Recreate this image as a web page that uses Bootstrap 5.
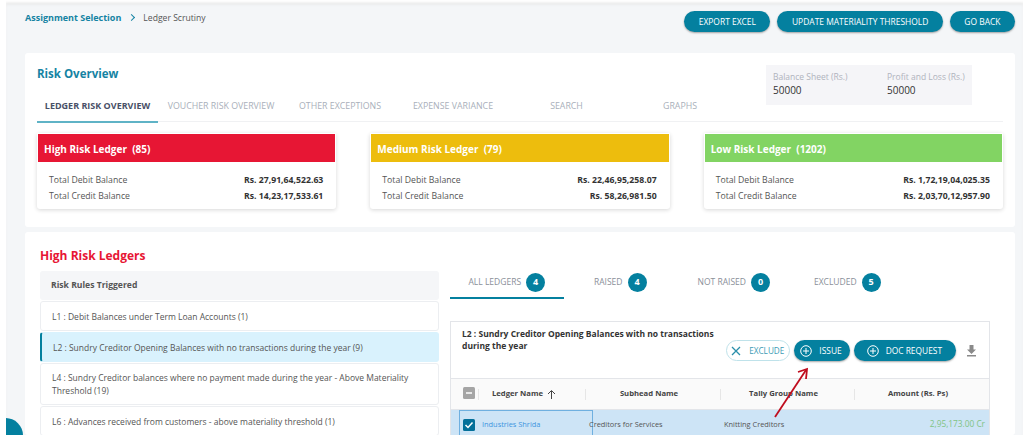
<!DOCTYPE html>
<html lang="en"><head><meta charset="utf-8"><title>Ledger Scrutiny</title>
<link href="https://cdn.jsdelivr.net/npm/bootstrap@5.3.0/dist/css/bootstrap.min.css" rel="stylesheet">
<style>
html,body{height:442px;overflow:hidden;background:#fff}
body{font-family:"Open Sans","Liberation Sans",sans-serif;color:#444;font-size:9px}
.shell{margin-left:6px;height:435px;background:#f4f6f8;overflow:hidden;position:relative;box-shadow:inset 0 4px 3px -1px #fff,inset 0 5px 3px -1px #ddd}
.topline{height:49px;padding:11px 8px 0 19px;margin-bottom:4px}
.crumbs{margin:0;font-size:8.6px;line-height:14px}
.crumbs a{color:#1583a3;font-weight:700;text-decoration:none;font-size:9px}
.crumbs .breadcrumb-item+.breadcrumb-item{padding-left:8px;color:#555}
.crumbs .breadcrumb-item+.breadcrumb-item::before{content:"";display:inline-block;width:5px;height:5px;border-top:1.5px solid #1583a3;border-right:1.5px solid #1583a3;transform:rotate(45deg);padding:0;margin:0 9px 1px 0;float:none}
.toptools{gap:7px}
.pill{background:#04809f;color:#fff;border:0;border-radius:11px;font-size:8.45px;line-height:12px;height:21px;padding:0 14.5px;box-shadow:0 1px 2px rgba(0,0,0,.35);display:inline-flex;align-items:center;white-space:nowrap}
.pill:hover{background:#04809f;color:#fff}
.panel{margin-left:19px;margin-right:8px;background:#fff;border:0;border-radius:3px}
.overview{height:174px;padding:13px 12px 0;margin-bottom:5px;position:relative}
.ov-title{font-size:11.5px;font-weight:700;color:#1583a3;line-height:16px;margin:0}
.tabs1{border-bottom:1px solid #f0f1f3;margin-top:7px;height:33px;flex-wrap:nowrap}
.tabs1 .nav-link{font-size:8.8px;color:#a9afba;padding:0;line-height:34px;height:32px;text-align:center;border-bottom:2px solid transparent}
.tabs1 .nav-link.active{color:#495067;font-weight:700;font-size:9px;border-bottom-color:#5fb3c6;height:34px}
.t1{width:121px}.t2{width:126px}.t3{width:112px}.t4{width:114px}.t5{width:113px}.t6{width:114px}
.stat{position:absolute;left:741px;top:12px;width:206px;height:40px;background:#f5f5f8;padding:6px 7px 0}
.stat div{width:114px;flex:none;line-height:12px;font-size:8.5px;color:#b0b3bd}
.stat div+div{width:85px}
.stat b{display:block;font-weight:400;font-size:10px;color:#333;line-height:14px}
.risks{margin-top:11px;gap:34px}
.rcard{width:299.5px;height:76px;border:0;box-shadow:0 1px 4px rgba(0,0,0,.16);border-radius:3px}
.rcard .card-header{height:30px;line-height:30px;padding:0 6px;font-size:10px;font-weight:700;color:#fff;border:1px solid #fff;border-radius:0;margin:0}
.rh{background:#e71634}.rm{background:#edbd0d}.rl{background:#82d463}
.rcard .card-body{padding:10px 13px 0 12px;line-height:15.5px;font-size:8.7px;color:#555}
.rcard b{color:#333}
.ledgers{height:203px;padding:0 25px 0 15px;overflow:hidden}
.led-title{font-size:12px;font-weight:700;color:#e71634;line-height:16px;margin:16px 0 7px}
.cols{gap:11px}
.lcol{width:399px;flex:none}
.rule-head{height:29px;background:#f5f6f8;border-radius:3px;line-height:29px;padding-left:11px;font-weight:700;color:#555;font-size:8.6px;margin-bottom:1px}
.rules{border-radius:3px}
.rules .list-group-item{padding:0 11px;font-size:8.5px;line-height:13px;color:#555;border:1px solid #eceef1;border-radius:3px;margin:0 0 1px;display:flex;align-items:center;height:30px}
.rules .list-group-item.tall{height:42px}
.rules .list-group-item.active{background:#d9f2fd;color:#555;border-color:#d9f2fd;border-left:2px solid #04809f;margin-top:0}
.rcol{flex:1;min-width:0;margin-top:-1px}
.tabs2{height:29px;flex-wrap:nowrap}
.tabs2 .nav-link{padding:0 0 3px;font-size:8.5px;color:#8a8f99;display:flex;align-items:center;justify-content:center;gap:5px;height:29px;border-bottom:2px solid transparent}
.tabs2 .nav-item{width:113.5px}
.tabs2 .nav-link.active{border-bottom-color:#04809f}
.cnt{background:#04809f;color:#fff;border-radius:50%;width:19px;height:19px;font-size:9px;font-weight:700;display:inline-flex;align-items:center;justify-content:center;padding:0}
.tpanel{margin-top:22px;width:540px;border:1px solid #e3e5e9;border-bottom:0;height:115px;background:#fff}
.thead-row{height:56px;padding:6px 12px 0 11px}
.tpanel h6{font-size:8.5px;line-height:12px;font-weight:700;color:#333;width:262px;flex:none;margin:0}
.acts{margin-top:12px;gap:4px;margin-left:auto;align-items:flex-start}
.acts .pill{font-size:8.4px;gap:7px;padding:0 8px 0 6px}
.acts .doc{padding:0 14px 0 13px}
.acts .ghost{background:#fff;color:#3d9bb5;border:1px solid #bfe2ea;box-shadow:none;font-size:8.2px;padding:0 5px 0 4px;gap:8px}
.dl{margin:5px 0 0 6px}
.ltable{margin:0;border-top:1px solid #e3e5e9;table-layout:fixed;width:100%}
.ltable th{height:31px;background:#fafafa;font-size:7.7px;font-weight:700;color:#444;text-align:center;vertical-align:middle;padding:0 7px 0 0;border-bottom:1px solid #e3e5e9;position:relative}
.ltable th+th::before{content:"";position:absolute;left:0;top:10px;height:11px;border-left:1px solid #e6e6e6}
.ltable th.first{text-align:left;padding-left:12px}
.ltable th.sorted{padding-right:15px}
.ltable tbody tr{background:#cde4f6}
.ltable td{height:29px;background:transparent;padding:0 0 0 4px;font-size:7.4px;color:#555;vertical-align:middle;border:0;box-shadow:none}
.ltable td.focuscell{padding:0}
.ltable td.cr{color:#7fc384;text-align:right;padding:0 4px 0 0;font-size:8.3px}
.chk{width:12px;height:12px;border-radius:1.5px;display:inline-flex;align-items:center;justify-content:center;flex:none}
.chk-m{background:#a5a5a5}
.chk-c{background:#04709a}
.focus{display:flex;align-items:center;height:29px;border:1px solid #6fb0e0;width:134px;margin-left:8px;padding-left:3px;gap:7px;color:#3d94e0}
.bubble{position:absolute;left:-18px;bottom:-18px;width:35px;height:35px;background:#04809f;border-radius:50%}
.arrow{position:absolute;left:764px;top:360px;width:50px;height:62px;pointer-events:none}
</style></head>
<body>
<div class="shell">
  <div class="topline d-flex justify-content-between">
    <nav aria-label="breadcrumb"><ol class="breadcrumb crumbs"><li class="breadcrumb-item"><a href="#">Assignment Selection</a></li><li class="breadcrumb-item active">Ledger Scrutiny</li></ol></nav>
    <div class="d-flex toptools"><button class="btn pill">EXPORT EXCEL</button><button class="btn pill">UPDATE MATERIALITY THRESHOLD</button><button class="btn pill">GO BACK</button></div>
  </div>
  <section class="panel overview">
    <h5 class="ov-title">Risk Overview</h5>
    <ul class="nav tabs1">
      <li class="nav-item t1"><a class="nav-link active" href="#">LEDGER RISK OVERVIEW</a></li>
      <li class="nav-item t2"><a class="nav-link" href="#">VOUCHER RISK OVERVIEW</a></li>
      <li class="nav-item t3"><a class="nav-link" href="#">OTHER EXCEPTIONS</a></li>
      <li class="nav-item t4"><a class="nav-link" href="#">EXPENSE VARIANCE</a></li>
      <li class="nav-item t5"><a class="nav-link" href="#">SEARCH</a></li>
      <li class="nav-item t6"><a class="nav-link" href="#">GRAPHS</a></li>
    </ul>
    <div class="stat d-flex"><div>Balance Sheet (Rs.)<b>50000</b></div><div>Profit and Loss (Rs.)<b>50000</b></div></div>
    <div class="d-flex risks">
      <div class="card rcard"><div class="card-header rh">High Risk Ledger&nbsp; (85)</div><div class="card-body"><div class="d-flex justify-content-between"><span>Total Debit Balance</span><b>Rs. 27,91,64,522.63</b></div><div class="d-flex justify-content-between"><span>Total Credit Balance</span><b>Rs. 14,23,17,533.61</b></div></div></div>
      <div class="card rcard"><div class="card-header rm">Medium Risk Ledger&nbsp; (79)</div><div class="card-body"><div class="d-flex justify-content-between"><span>Total Debit Balance</span><b>Rs. 22,46,95,258.07</b></div><div class="d-flex justify-content-between"><span>Total Credit Balance</span><b>Rs. 58,26,981.50</b></div></div></div>
      <div class="card rcard"><div class="card-header rl">Low Risk Ledger&nbsp; (1202)</div><div class="card-body"><div class="d-flex justify-content-between"><span>Total Debit Balance</span><b>Rs. 1,72,19,04,025.35</b></div><div class="d-flex justify-content-between"><span>Total Credit Balance</span><b>Rs. 2,03,70,12,957.90</b></div></div></div>
    </div>
  </section>
  <section class="panel ledgers">
    <h5 class="led-title">High Risk Ledgers</h5>
    <div class="d-flex cols">
      <div class="lcol">
        <div class="rule-head">Risk Rules Triggered</div>
        <div class="list-group rules">
          <div class="list-group-item">L1 : Debit Balances under Term Loan Accounts (1)</div>
          <div class="list-group-item active">L2 : Sundry Creditor Opening Balances with no transactions during the year (9)</div>
          <div class="list-group-item tall">L4 : Sundry Creditor balances where no payment made during the year - Above Materiality Threshold (19)</div>
          <div class="list-group-item">L6 : Advances received from customers - above materiality threshold (1)</div>
        </div>
      </div>
      <div class="rcol">
        <ul class="nav tabs2">
          <li class="nav-item"><a class="nav-link active" href="#">ALL LEDGERS <span class="cnt">4</span></a></li>
          <li class="nav-item"><a class="nav-link" href="#">RAISED <span class="cnt">4</span></a></li>
          <li class="nav-item"><a class="nav-link" href="#">NOT RAISED <span class="cnt">0</span></a></li>
          <li class="nav-item"><a class="nav-link" href="#">EXCLUDED <span class="cnt">5</span></a></li>
        </ul>
        <div class="tpanel">
          <div class="d-flex thead-row">
            <h6>L2 : Sundry Creditor Opening Balances with no transactions during the year</h6>
            <div class="d-flex acts">
              <button class="btn pill ghost"><svg width="10" height="10" viewBox="0 0 10 10"><path d="M1 1l8 8M9 1l-8 8" stroke="#2a8fab" stroke-width="1.300" fill="none"/></svg>EXCLUDE</button>
              <button class="btn pill"><svg width="12" height="12" viewBox="0 0 12 12"><circle cx="6" cy="6" r="5.300" fill="none" stroke="#fff" stroke-width="1"/><path d="M6 3v6M3 6h6" stroke="#fff"/></svg>ISSUE</button>
              <button class="btn pill doc"><svg width="12" height="12" viewBox="0 0 12 12"><circle cx="6" cy="6" r="5.300" fill="none" stroke="#fff" stroke-width="1"/><path d="M6 3v6M3 6h6" stroke="#fff"/></svg>DOC REQUEST</button>
              <svg class="dl" width="11" height="12" viewBox="0 0 11 12"><path d="M3.500 0h4v4.500H10L5.500 9 1 4.500h2.500z M1 10h9v1.500H1z" fill="#8a8a8a"/></svg>
            </div>
          </div>
          <table class="table ltable">
            <colgroup><col style="width:27px"><col style="width:107px"><col style="width:135px"><col style="width:134px"><col></colgroup>
            <thead><tr><th class="first"><span class="chk chk-m"><svg width="8" height="8" viewBox="0 0 8 8"><path d="M1 4h6" stroke="#fff" stroke-width="1.500"/></svg></span></th><th class="sorted">Ledger Name &nbsp;<svg width="9" height="9" viewBox="0 0 9 9"><path d="M4.500 9V1M1 4l3.500-3.500L8 4" stroke="#444" fill="none"/></svg></th><th>Subhead Name</th><th>Tally Group Name</th><th>Amount (Rs. Ps)</th></tr></thead>
            <tbody><tr><td colspan="2" class="focuscell"><div class="focus"><span class="chk chk-c"><svg width="10" height="10" viewBox="0 0 10 10"><path d="M1.500 5l2.500 2.500L8.500 2.500" stroke="#fff" stroke-width="1.500" fill="none"/></svg></span>Industries Shrida</div></td><td>Creditors for Services</td><td>Knitting Creditors</td><td class="cr">2,95,173.00 Cr</td></tr></tbody>
          </table>
        </div>
      </div>
    </div>
  </section>
  <div class="bubble"></div>
  <svg class="arrow" viewBox="0 0 50 62"><path d="M5 57L36 10" stroke="#c00d1e" stroke-width="1.800" fill="none"/><path d="M28 12L37 9l-1 10" stroke="#c00d1e" stroke-width="1.800" fill="none"/></svg>
</div>
</body></html>
